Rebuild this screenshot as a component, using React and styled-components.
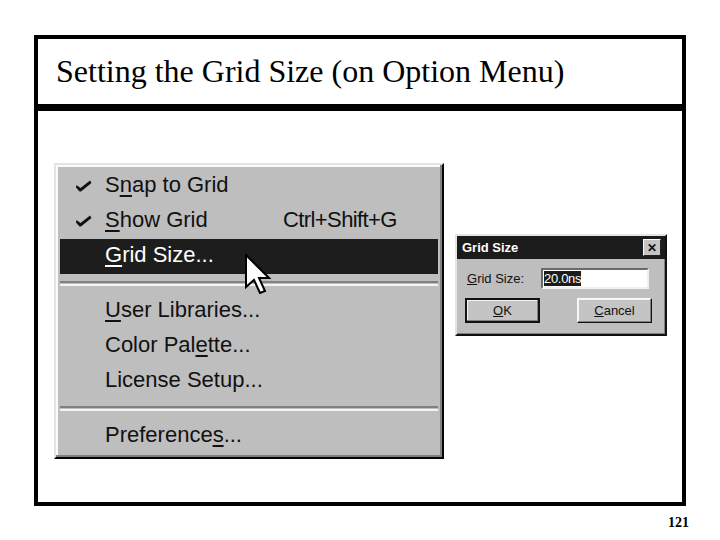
import React from 'react';
import styled, { createGlobalStyle } from 'styled-components';

const GlobalStyle = createGlobalStyle`
  html, body {
    margin: 0;
    padding: 0;
    background: #fff;
  }
`;

const menuItems = [
  { label: <>S<u>n</u>ap to Grid</>, checked: true },
  { label: <><u>S</u>how Grid</>, checked: true, shortcut: 'Ctrl+Shift+G' },
  { label: <><u>G</u>rid Size...</>, active: true },
  { separator: true },
  { label: <><u>U</u>ser Libraries...</> },
  { label: <>Color Pal<u>e</u>tte...</> },
  { label: <>License Setup...</> },
  { separator: true },
  { label: <>Preference<u>s</u>...</> },
];

const CheckMark = () => (
  <svg width="16" height="12" viewBox="0 0 16 12">
    <path d="M0.5 5 L4.5 8 L14 0.5 L15.5 3 L5 11.5 L3.5 11.5 L0 7.5 Z" fill="#111" />
  </svg>
);

const Cursor = () => (
  <svg width="26" height="40" viewBox="-0.5 -0.5 13 20">
    <path
      d="M0 0 L0 16 L4 12.5 L7 19 L9.5 18 L6.5 11.5 L11.5 11.5 Z"
      fill="#fff"
      stroke="#000"
      strokeWidth="1"
      strokeLinejoin="miter"
    />
  </svg>
);

const App = () => {
  return (
    <>
      <GlobalStyle />
      <Slide>
        <Header>Setting the Grid Size (on Option Menu)</Header>
        <Body>
          <Menu>
            {menuItems.map((item, i) =>
              item.separator ? (
                <Separator key={i} />
              ) : (
                <MenuRow key={i} active={item.active}>
                  <CheckCell>{item.checked && <CheckMark />}</CheckCell>
                  <span>{item.label}</span>
                  <Shortcut>{item.shortcut}</Shortcut>
                </MenuRow>
              )
            )}
            <CursorSpot>
              <Cursor />
            </CursorSpot>
          </Menu>

          <Dialog>
            <TitleBar>
              <span>Grid Size</span>
              <CloseButton>✕</CloseButton>
            </TitleBar>
            <DialogBody>
              <FieldRow>
                <FieldLabel><u>G</u>rid Size:</FieldLabel>
                <Input>
                  <Selected>20.0ns</Selected>
                </Input>
              </FieldRow>
              <ButtonRow>
                <Button default><u>O</u>K</Button>
                <Button><u>C</u>ancel</Button>
              </ButtonRow>
            </DialogBody>
          </Dialog>
        </Body>
      </Slide>
      <PageNumber>121</PageNumber>
    </>
  );
};

export default App;

const Slide = styled.div`
  box-sizing: border-box;
  margin: 35px 0 0 34px;
  width: 652px;
  height: 471px;
  border: 4px solid #000;
  display: flex;
  flex-direction: column;
`;

const Header = styled.div`
  height: 65px;
  border-bottom: 7px solid #000;
  display: flex;
  align-items: center;
  padding-left: 18px;
  font-family: 'Liberation Serif', 'Times New Roman', serif;
  font-size: 32px;
  color: #000;
`;

const Body = styled.div`
  flex: 1;
  display: flex;
  align-items: flex-start;
  padding: 52px 0 0 16px;
`;

const Menu = styled.div`
  position: relative;
  box-sizing: border-box;
  width: 390px;
  height: 296px;
  padding: 4px 4px 2px;
  background: #bebebe;
  border: 2px solid;
  border-color: #e4e4e4 #050505 #050505 #e4e4e4;
  box-shadow: inset -2px -2px 0 #808080, inset 2px 2px 0 #fafafa;
  font-family: 'Liberation Sans', Arial, sans-serif;
  font-size: 22px;
  color: #111;
`;

const MenuRow = styled.div`
  display: grid;
  grid-template-columns: 45px 178px 1fr;
  align-items: center;
  height: 35px;
  padding-bottom: 4px;
  box-sizing: border-box;
  background: ${p => (p.active ? '#1d1d1d' : 'transparent')};
  color: ${p => (p.active ? '#fff' : '#111')};
  white-space: nowrap;

  u {
    text-underline-offset: 3px;
    text-decoration-thickness: 2px;
  }
`;

const Shortcut = styled.span`
  letter-spacing: -0.6px;
`;

const CheckCell = styled.span`
  display: flex;
  justify-content: center;
  padding-left: 2px;
  padding-top: 2px;
`;

const Separator = styled.div`
  height: 20px;
  display: flex;
  align-items: flex-start;
  padding-top: 7px;
  box-sizing: border-box;

  &::after {
    content: '';
    display: block;
    width: 100%;
    height: 1px;
    border-top: 2px solid #808080;
    border-bottom: 2px solid #f4f4f4;
  }
`;

const CursorSpot = styled.div`
  position: absolute;
  left: 189px;
  top: 89px;
  line-height: 0;
`;

const Dialog = styled.div`
  box-sizing: border-box;
  width: 212px;
  height: 102px;
  margin: 71px 0 0 11px;
  background: #bebebe;
  border: 2px solid;
  border-color: #e4e4e4 #111 #111 #e4e4e4;
  box-shadow: inset -1px -1px 0 #808080;
  font-family: 'Liberation Sans', Arial, sans-serif;
  font-size: 13px;
  color: #111;
`;

const TitleBar = styled.div`
  height: 23px;
  background: #1b1b1b;
  color: #fff;
  font-weight: bold;
  display: flex;
  align-items: center;
  justify-content: space-between;
  padding: 0 4px 0 5px;
`;

const CloseButton = styled.span`
  box-sizing: border-box;
  width: 18px;
  height: 17px;
  background: #c4c4c4;
  color: #111;
  border: 1px solid;
  border-color: #fafafa #222 #222 #fafafa;
  display: flex;
  align-items: center;
  justify-content: center;
  font-size: 12px;
  font-weight: bold;
`;

const DialogBody = styled.div`
  padding: 9px 13px 11px 8px;
  display: flex;
  flex-direction: column;
  gap: 9px;
`;

const FieldRow = styled.div`
  display: flex;
  align-items: center;
  height: 21px;
`;

const FieldLabel = styled.span`
  width: 76px;
  padding-left: 2px;
  box-sizing: border-box;
`;

const Input = styled.div`
  box-sizing: border-box;
  width: 108px;
  height: 21px;
  background: #fff;
  border: 2px solid;
  border-color: #6a6a6a #f0f0f0 #f0f0f0 #6a6a6a;
  display: flex;
  align-items: center;
  padding-left: 1px;
`;

const Selected = styled.span`
  background: #1b1b1b;
  color: #fff;
  letter-spacing: -0.3px;
  line-height: 15px;
`;

const ButtonRow = styled.div`
  display: flex;
  justify-content: space-between;
`;

const Button = styled.div`
  box-sizing: border-box;
  width: 75px;
  height: 25px;
  background: #c4c4c4;
  border: ${p => (p.default ? '2px' : '1px')} solid;
  border-color: ${p => (p.default ? '#111' : '#fafafa #111 #111 #fafafa')};
  box-shadow: inset -1px -1px 0 #808080, inset 1px 1px 0 #f4f4f4;
  display: flex;
  align-items: center;
  justify-content: center;
`;

const PageNumber = styled.div`
  width: 689px;
  margin-top: 9px;
  text-align: right;
  font-family: 'Liberation Serif', 'Times New Roman', serif;
  font-size: 14px;
  font-weight: bold;
  color: #000;
`;
